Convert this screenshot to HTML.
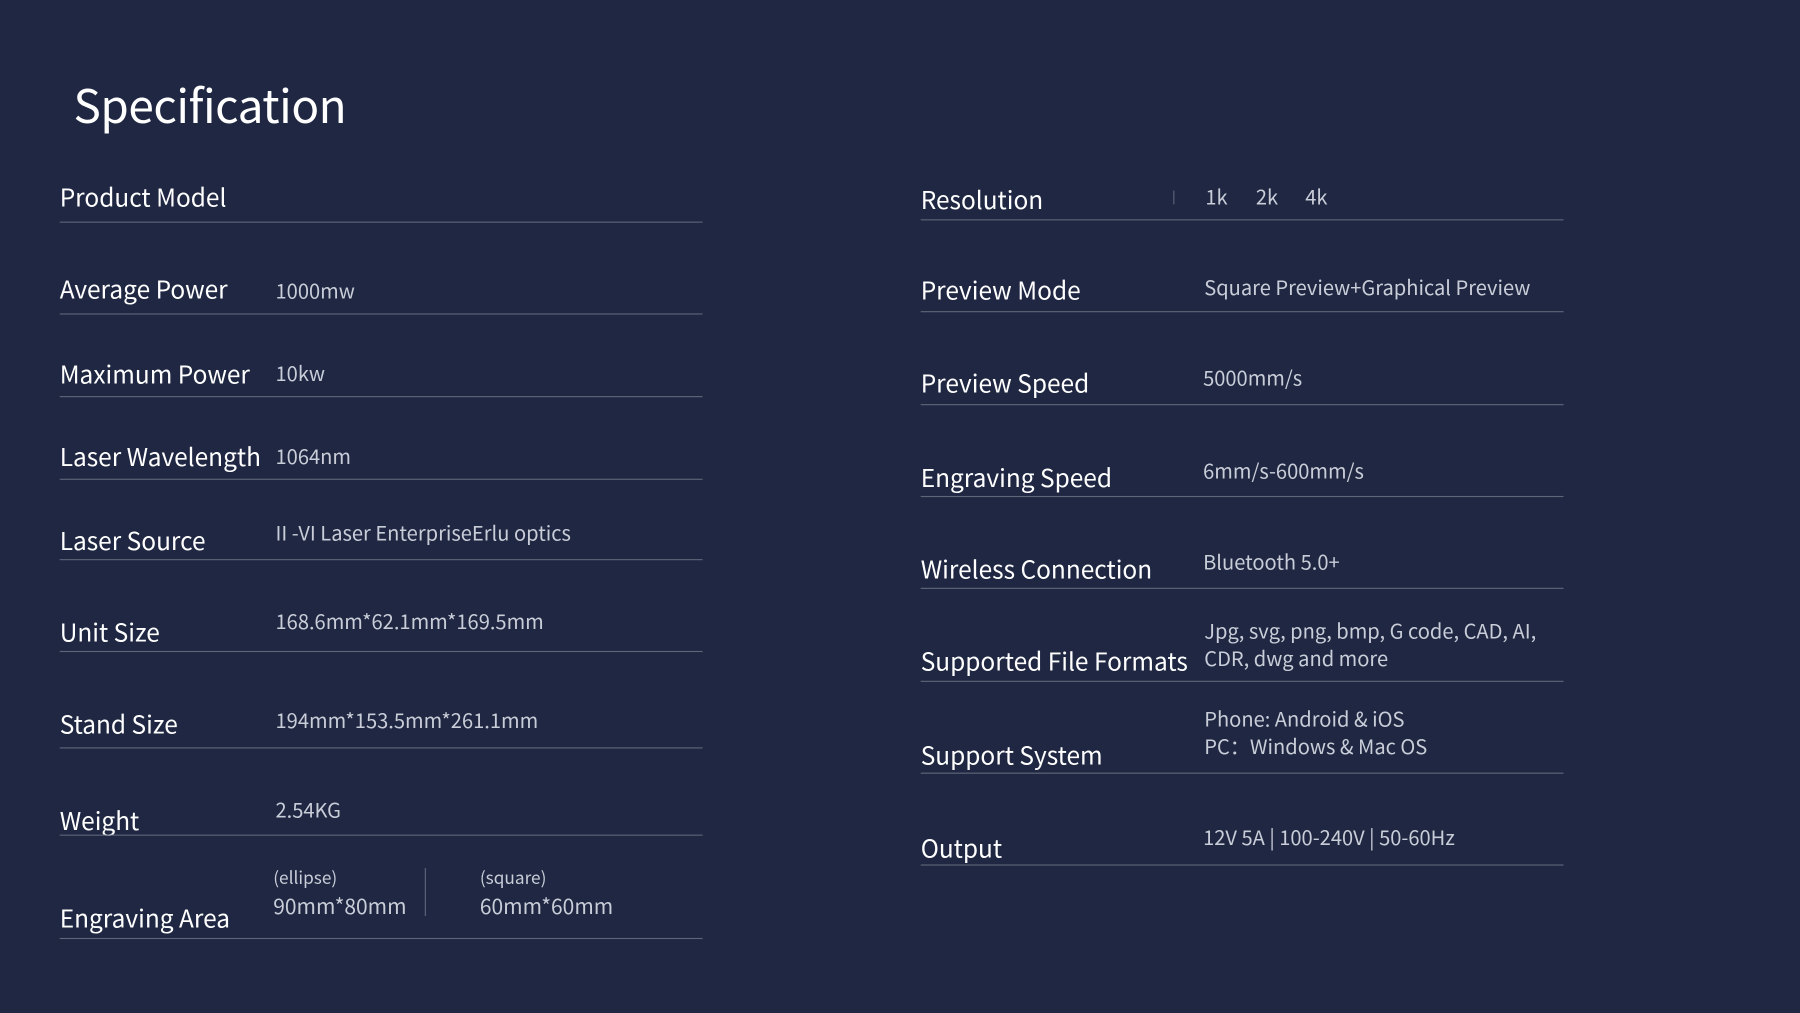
<!DOCTYPE html>
<html><head><meta charset="utf-8"><style>
html,body{margin:0;padding:0;background:#1f2742;width:1800px;height:1013px;overflow:hidden}
#w{position:absolute;left:0;top:0;width:1568px;height:882px;transform:scale(1.148);transform-origin:0 0;font-family:"Noto Sans CJK SC","Liberation Sans",sans-serif}
#w div{position:absolute;line-height:1;white-space:nowrap}
.t{font-size:40px;color:#fff;letter-spacing:-0.4px}
.l{font-size:21.3px;color:#fff}
.v{font-size:17.5px;color:#c9cdd8}
.s{font-size:15px;color:#c9cdd8}
.h{height:1px;background:#5d6579}
</style></head><body><div id="w">
<div class="t" style="left:64px;top:70px">Specification</div>

<div class="l" style="left:52px;top:161px">Product Model</div><div class="h" style="left:52px;top:193px;width:560px"></div>
<div class="l" style="left:52px;top:241px">Average Power</div><div class="v" style="left:240px;top:245px">1000mw</div><div class="h" style="left:52px;top:273px;width:560px"></div>
<div class="l" style="left:52px;top:315px">Maximum Power</div><div class="v" style="left:240px;top:317px">10kw</div><div class="h" style="left:52px;top:345px;width:560px"></div>
<div class="l" style="left:52px;top:387px">Laser Wavelength</div><div class="v" style="left:240px;top:389px">1064nm</div><div class="h" style="left:52px;top:417px;width:560px"></div>
<div class="l" style="left:52px;top:460px">Laser Source</div><div class="v" style="left:240px;top:456px">II -VI Laser EnterpriseErlu optics</div><div class="h" style="left:52px;top:487px;width:560px"></div>
<div class="l" style="left:52px;top:540px">Unit Size</div><div class="v" style="left:240px;top:533px">168.6mm*62.1mm*169.5mm</div><div class="h" style="left:52px;top:567px;width:560px"></div>
<div class="l" style="left:52px;top:620px">Stand Size</div><div class="v" style="left:240px;top:619px">194mm*153.5mm*261.1mm</div><div class="h" style="left:52px;top:651px;width:560px"></div>
<div class="l" style="left:52px;top:704px">Weight</div><div class="v" style="left:240px;top:697px">2.54KG</div><div class="h" style="left:52px;top:727px;width:560px"></div>
<div class="l" style="left:52px;top:789px">Engraving Area</div>
<div class="s" style="left:238px;top:757px">(ellipse)</div><div class="v" style="left:238px;top:780px;font-size:18.3px">90mm*80mm</div>
<div style="left:370px;top:756px;width:1px;height:42px;background:#5d6579"></div>
<div class="s" style="left:418px;top:757px">(square)</div><div class="v" style="left:418px;top:780px;font-size:18.3px">60mm*60mm</div>
<div class="h" style="left:52px;top:817px;width:560px"></div>

<div class="l" style="left:802px;top:163px">Resolution</div>
<div style="left:1022px;top:166px;width:1px;height:12px;background:#5d6579"></div>
<div class="v" style="left:1050px;top:163px">1k</div><div class="v" style="left:1094px;top:163px">2k</div><div class="v" style="left:1137px;top:163px">4k</div>
<div class="h" style="left:802px;top:191px;width:560px"></div>
<div class="l" style="left:802px;top:242px">Preview Mode</div><div class="v" style="left:1049px;top:242px">Square Preview+Graphical Preview</div><div class="h" style="left:802px;top:271px;width:560px"></div>
<div class="l" style="left:802px;top:323px">Preview Speed</div><div class="v" style="left:1048px;top:321px">5000mm/s</div><div class="h" style="left:802px;top:352px;width:560px"></div>
<div class="l" style="left:802px;top:405px">Engraving Speed</div><div class="v" style="left:1048px;top:402px">6mm/s-600mm/s</div><div class="h" style="left:802px;top:432px;width:560px"></div>
<div class="l" style="left:802px;top:485px">Wireless Connection</div><div class="v" style="left:1048px;top:481px">Bluetooth 5.0+</div><div class="h" style="left:802px;top:512px;width:560px"></div>
<div class="l" style="left:802px;top:565px">Supported File Formats</div><div class="v" style="left:1049px;top:541px">Jpg, svg, png, bmp, G code, CAD, AI,</div><div class="v" style="left:1049px;top:565px">CDR, dwg and more</div><div class="h" style="left:802px;top:593px;width:560px"></div>
<div class="l" style="left:802px;top:647px">Support System</div><div class="v" style="left:1049px;top:618px">Phone: Android &amp; iOS</div><div class="v" style="left:1049px;top:642px">PC：Windows &amp; Mac OS</div><div class="h" style="left:802px;top:673px;width:560px"></div>
<div class="l" style="left:802px;top:728px">Output</div><div class="v" style="left:1048px;top:721px">12V 5A | 100-240V | 50-60Hz</div><div class="h" style="left:802px;top:753px;width:560px"></div>
</div></body></html>
